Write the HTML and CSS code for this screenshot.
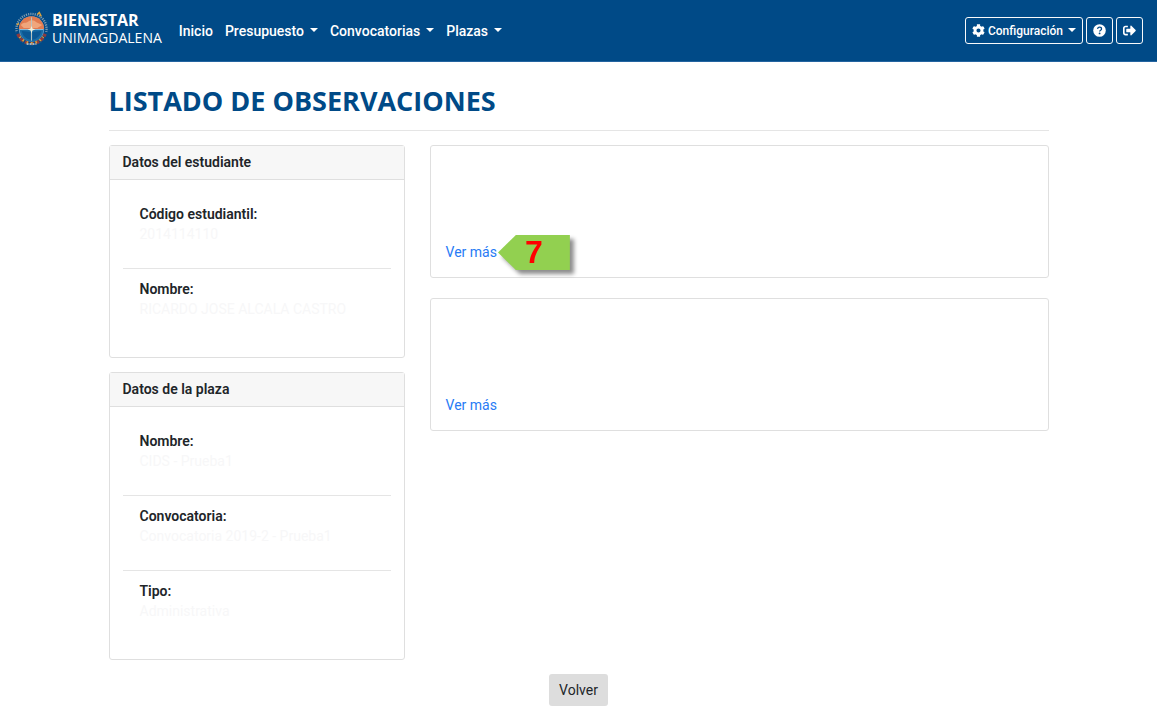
FILE: index.html
```html
<!DOCTYPE html>
<html lang="es">
<head>
<meta charset="utf-8">
<meta name="viewport" content="width=device-width, initial-scale=1">
<title>Bienestar Unimagdalena - Listado de observaciones</title>
<link rel="stylesheet" href="styles.css">
</head>
<body>
<header class="navbar">
  <a class="brand" href="#">
    <svg class="brand-logo" viewBox="0 0 36 36" aria-hidden="true">
      <circle cx="18" cy="18" r="15.500" fill="none" stroke="#7d9bb0" stroke-width="2.400" stroke-dasharray="1.200 1.100"/>
      <path d="M3 21a15.500 15.500 0 0 0 30 0" fill="none" stroke="#004a87" stroke-width="4"/>
      <path d="M4 23a15 15 0 0 0 28 0" fill="none" stroke="#8f3a3d" stroke-width="3.500" stroke-dasharray="4 1.500"/>
      <path d="M6 26a14.500 14.500 0 0 0 24 0" fill="none" stroke="#d9a637" stroke-width="2.500" stroke-dasharray="1.500 3"/>
      <path d="M13 33.500h10" stroke="#9bb7c7" stroke-width="2" stroke-dasharray="2 1"/>
      <path d="M24 3l2-2 2 4" fill="none" stroke="#e0a33a" stroke-width="1.500"/>
      <path d="M3 14l2-2" stroke="#e0a33a" stroke-width="1.500"/>
      <circle cx="18" cy="18" r="13" fill="#5f9dc8"/>
      <path d="M5 18a13 13 0 0 1 26 0z" fill="#e17b50"/>
      <path d="M7 14c3-4 5-1 8-4 3-2 6-1 8 1l6 3-5 3H10z" fill="#f0a67c"/>
      <path d="M6 19h24a12 12 0 0 1-24 0z" fill="#196ca5"/>
      <path d="M8 20l9 1v8c-5-1-8-4-9-9zm20 0l-9 1v8c5-1 8-4 9-9z" fill="#0b5793"/>
      <path d="M18 6v24" stroke="#b9c3c0" stroke-width="1"/>
      <path d="M6 18.500h24" stroke="#8fbcd6" stroke-width="1"/>
      <path d="M18 15l1 2.500 3 1-3 1-1 3-1-3-3-1 3-1z" fill="#eef0dc"/>
    </svg>
    <span class="brand-text"><strong>BIENESTAR</strong><span>UNIMAGDALENA</span></span>
  </a>
  <nav class="menu" aria-label="Principal">
    <a href="#">Inicio</a>
    <a class="has-caret" href="#">Presupuesto</a>
    <a class="has-caret" href="#">Convocatorias</a>
    <a class="has-caret" href="#">Plazas</a>
  </nav>
  <div class="tools">
    <button class="tool has-caret" type="button">
      <svg class="icon" viewBox="0 0 512 512" aria-hidden="true"><path fill="currentColor" d="M487.400 315.700l-42.600-24.600c4.300-23.200 4.300-47 0-70.200l42.600-24.600c4.900-2.800 7.100-8.600 5.500-14-11.100-35.600-30-67.800-54.700-94.600-3.800-4.100-10-5.100-14.800-2.300L380.800 110c-17.900-15.400-38.500-27.300-60.800-35.100V25.800c0-5.600-3.900-10.500-9.400-11.700-36.700-8.200-74.300-7.800-109.200 0-5.500 1.200-9.400 6.100-9.400 11.700V75c-22.200 7.900-42.800 19.800-60.800 35.100L88.700 85.500c-4.900-2.800-11-1.900-14.800 2.300-24.700 26.700-43.600 58.900-54.700 94.600-1.700 5.400.6 11.200 5.500 14L67.300 221c-4.300 23.200-4.300 47 0 70.200l-42.600 24.600c-4.900 2.800-7.100 8.600-5.500 14 11.100 35.600 30 67.800 54.700 94.600 3.800 4.100 10 5.100 14.800 2.300l42.600-24.600c17.900 15.400 38.500 27.300 60.800 35.100v49.200c0 5.600 3.900 10.500 9.400 11.700 36.700 8.200 74.300 7.800 109.200 0 5.500-1.200 9.400-6.100 9.400-11.700v-49.200c22.200-7.900 42.800-19.800 60.800-35.100l42.600 24.600c4.900 2.800 11 1.900 14.800-2.300 24.700-26.700 43.600-58.900 54.700-94.600 1.500-5.500-.7-11.300-5.600-14.100zM256 336c-44.100 0-80-35.900-80-80s35.900-80 80-80 80 35.900 80 80-35.900 80-80 80z"/></svg>
      <span>Configuración</span>
    </button>
    <button class="tool" type="button" aria-label="Ayuda">
      <svg class="icon" viewBox="0 0 512 512" aria-hidden="true"><circle cx="256" cy="256" r="248" fill="currentColor"/><path d="M178 196c10-48 38-72 80-72 44 0 78 28 78 68 0 54-76 54-76 106" fill="none" stroke="#004a87" stroke-width="50"/><circle cx="260" cy="370" r="36" fill="#004a87"/></svg>
    </button>
    <button class="tool" type="button" aria-label="Salir">
      <svg class="icon" viewBox="0 0 512 512" aria-hidden="true"><path fill="currentColor" d="M497 273L329 441c-15 15-41 4.500-41-17v-96H152c-13.300 0-24-10.700-24-24v-96c0-13.300 10.700-24 24-24h136V88c0-21.400 25.900-32 41-17l168 168c9.300 9.400 9.300 24.600 0 34zM192 436v-40c0-6.600-5.400-12-12-12H96c-17.700 0-32-14.300-32-32V160c0-17.700 14.300-32 32-32h84c6.600 0 12-5.400 12-12V76c0-6.600-5.400-12-12-12H96c-53 0-96 43-96 96v192c0 53 43 96 96 96h84c6.600 0 12-5.400 12-12z"/></svg>
    </button>
  </div>
</header>
<main class="container">
  <h1 class="title">LISTADO DE OBSERVACIONES</h1>
  <div class="columns">
    <div class="sidebar">
      <section class="card">
        <h2 class="card-header">Datos del estudiante</h2>
        <dl class="data">
          <div class="item"><dt>Código estudiantil:</dt><dd>2014114110</dd></div>
          <div class="item"><dt>Nombre:</dt><dd>RICARDO JOSE ALCALA CASTRO</dd></div>
        </dl>
      </section>
      <section class="card">
        <h2 class="card-header">Datos de la plaza</h2>
        <dl class="data">
          <div class="item"><dt>Nombre:</dt><dd>CIDS - Prueba1</dd></div>
          <div class="item"><dt>Convocatoria:</dt><dd>Convocatoria 2019-2 - Prueba1</dd></div>
          <div class="item"><dt>Tipo:</dt><dd>Administrativa</dd></div>
        </dl>
      </section>
    </div>
    <div class="notes">
      <article class="card note">
        <div class="note-link"><a href="#">Ver más</a><span class="marker"><span class="marker-shape">7</span></span></div>
      </article>
      <article class="card note">
        <div class="note-link"><a href="#">Ver más</a></div>
      </article>
    </div>
  </div>
  <div class="actions"><button class="back" type="button">Volver</button></div>
</main>
</body>
</html>
```
FILE: styles.css
```css
* { box-sizing: border-box; }

body {
  margin: 0;
  background: #fff;
  color: #212529;
  font: 14px/20px Roboto, sans-serif;
}

a { text-decoration: none; }

.navbar {
  display: flex;
  align-items: center;
  min-height: 62px;
  padding: 0 14px;
  background: #004a87;
  border-bottom: 1px solid #2464a0;
}

.brand {
  display: flex;
  align-items: center;
  gap: 3px;
  padding-bottom: 3px;
  color: #fff;
  font-family: "Open Sans", sans-serif;
}

.brand-logo { width: 35px; height: 36px; }

.brand-text {
  display: flex;
  flex-direction: column;
  font-size: 14px;
  line-height: 18px;
}

.brand-text strong { font-size: 16px; }

.menu {
  display: flex;
  gap: 12px;
  margin-left: 17px;
}

.menu a { color: #fff; font-weight: 500; }

.has-caret::after {
  content: "";
  display: inline-block;
  margin-left: 6px;
  vertical-align: 4px;
  border: 4px solid transparent;
  border-top-color: currentColor;
  border-bottom: 0;
}

.tools { display: flex; gap: 3px; margin-left: auto; }

.tool {
  display: flex;
  align-items: center;
  gap: 3px;
  height: 27px;
  padding: 0 6px;
  border: 1px solid #f8f9fa;
  border-radius: 3px;
  background: none;
  color: #fff;
  font: 500 12px/18px Roboto, sans-serif;
}

.tool.has-caret::after { margin: 0 0 2px 2px; }

.icon { width: 13px; height: 13px; }

.container {
  max-width: 940px;
  margin: 0 auto;
}

.title {
  margin: 0 0 14px;
  padding: 22px 0 12px;
  border-bottom: 1px solid #e5e5e5;
  color: #004a87;
  font: 700 27px/34px "Open Sans", sans-serif;
}

.columns {
  display: grid;
  grid-template-columns: 11fr 23fr;
  gap: 25px;
}

.sidebar { display: flex; flex-direction: column; gap: 14px; }

.card {
  border: 1px solid #dfdfdf;
  border-radius: 3px;
  background: #fff;
}

.card-header {
  margin: 0;
  padding: 6px 13px 7px;
  border-bottom: 1px solid #dfdfdf;
  background: #f7f7f7;
  font-size: 14px;
  font-weight: 600;
  line-height: 20px;
}

.data { margin: 0; padding: 14px 13px; }

.item { padding: 10px 17px 24px; }

.item + .item { border-top: 1px solid #e5e5e5; }

.item dt { font-weight: 600; }

.item dd { margin: 0; color: #f7f7f8; }

.notes { display: flex; flex-direction: column; gap: 20px; }

.note {
  display: flex;
  align-items: flex-end;
  min-height: 133px;
  padding: 15px;
}

.note-link { position: relative; }

.note-link a { color: #277bf5; }

.marker {
  position: absolute;
  top: -7px;
  left: 100%;
  margin-left: 1px;
  filter: drop-shadow(4px 4px 2px rgba(0, 0, 0, 0.45));
}

.marker-shape {
  display: block;
  width: 72px;
  background: #92d050;
  clip-path: polygon(0 50%, 18px 0, 100% 0, 100% 100%, 18px 100%);
  color: #f00;
  font: 700 32px/35px "Liberation Sans", sans-serif;
  text-align: center;
}

.actions { padding: 14px 0; text-align: center; }

.back {
  padding: 6px 10px;
  border: 0;
  border-radius: 3px;
  background: #ddd;
  color: #212529;
  font: 14px/20px Roboto, sans-serif;
}
```
